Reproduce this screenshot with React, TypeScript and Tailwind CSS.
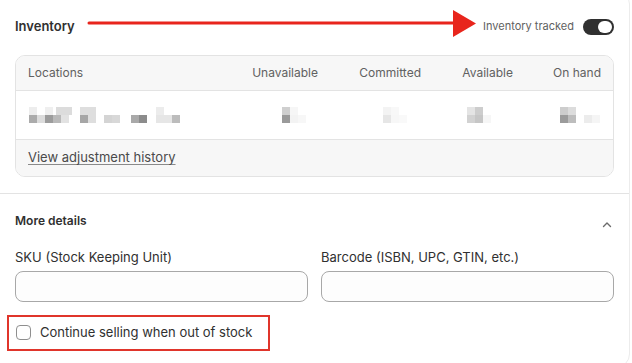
import React from 'react';

type Px = [number, number, string];

// blurred stock numbers (x, row, colour)
const locationPx: Px[] = [
  [0, 0, '#ededed'], [16, 0, '#efefef'], [27, 0, '#dcdcdc'], [35, 0, '#dcdcdc'], [51, 0, '#dedede'], [59, 0, '#dedede'], [127, 0, '#ececec'],
  [0, 1, '#ababab'], [8, 1, '#dcdcdc'], [16, 1, '#9c9c9c'], [24, 1, '#b9b9b9'], [32, 1, '#e2e2e2'],
  [51, 1, '#a6a6a6'], [59, 1, '#dedede'], [75, 1, '#d4d4d4'], [83, 1, '#d8d8d8'],
  [102, 1, '#a9a9a9'], [110, 1, '#8c8c8c'], [127, 1, '#e6e6e6'], [135, 1, '#e6e6e6'], [143, 1, '#bcbcbc'],
];
const unavailablePx: Px[] = [[0, 0, '#cfcfcf'], [8, 0, '#f6f6f6'], [0, 1, '#9a9a9a'], [8, 1, '#f3f3f3'], [16, 1, '#f7f7f7']];
const committedPx: Px[] = [[0, 0, '#f3f3f3'], [8, 0, '#f8f8f8'], [0, 1, '#e6e6e6'], [8, 1, '#f7f7f7'], [16, 1, '#f9f9f9']];
const availablePx: Px[] = [[0, 0, '#e4e4e4'], [8, 0, '#cdcdcd'], [0, 1, '#d2d2d2'], [8, 1, '#c6c6c6'], [16, 1, '#f6f6f6']];
const onHandPx: Px[] = [[0, 0, '#cdcdcd'], [8, 0, '#dcdcdc'], [0, 1, '#9b9b9b'], [8, 1, '#bdbdbd'], [24, 1, '#ececec'], [32, 1, '#f5f5f5']];

function Pixels({ data, width }: { data: Px[]; width: number }) {
  return (
    <div className="relative h-[16px]" style={{ width }}>
      {data.map(([x, r, c], i) => (
        <div key={i} className="absolute h-[8px] w-[8px]" style={{ left: x, top: r * 8, background: c }} />
      ))}
    </div>
  );
}

export default function App() {
  return (
    <div className="h-[363px] w-[632px] overflow-hidden bg-white" style={{ fontFamily: 'Inter, "Noto Sans", sans-serif' }}>
      <div className="-ml-[10px] -mt-[10px] w-[640px] rounded-[14px] border border-[#ececec] bg-white pl-[9px] pt-[17px] pb-[16px] text-[#303030]">
        {/* Inventory header */}
        <div className="relative flex h-[35px] items-center justify-between pl-[15px] pr-[15px] pt-[2px]">
          <h2 className="text-[13px] font-semibold">Inventory</h2>
          <div className="flex items-center gap-[9px]">
            <span className="text-[11px] text-[#616161]">Inventory tracked</span>
            <div className="flex h-[16px] w-[31px] items-center justify-end rounded-full bg-[#303030] pr-[2px]">
              <div className="h-[12px] w-[14px] rounded-full bg-white" />
            </div>
          </div>
          {/* annotation arrow */}
          <svg className="absolute left-[87px] top-[0px]" width="392" height="30" viewBox="0 0 392 30">
            <line x1="2" y1="15" x2="370" y2="15" stroke="#e8251c" strokeWidth="3" strokeLinecap="round" />
            <polygon points="366,2 389,15.5 366,29" fill="#e8251c" />
          </svg>
        </div>

        {/* locations table */}
        <div className="mx-[15px] mt-[12px] overflow-hidden rounded-[10px] border border-[#e3e3e3]">
          <div className="grid h-[35px] grid-cols-[1fr_103px_103px_92px_88px] items-center border-b border-[#e3e3e3] bg-[#f7f7f7] pl-[12px] pr-[12px] text-[12px] text-[#616161]">
            <span>Locations</span>
            <span className="text-right">Unavailable</span>
            <span className="text-right">Committed</span>
            <span className="text-right">Available</span>
            <span className="text-right">On hand</span>
          </div>
          <div className="flex h-[49px] items-center border-b border-[#e3e3e3] bg-white pl-[13px]">
            <Pixels data={locationPx} width={151} />
            <div className="ml-[102px]"><Pixels data={unavailablePx} width={24} /></div>
            <div className="ml-[77px]"><Pixels data={committedPx} width={24} /></div>
            <div className="ml-[60px]"><Pixels data={availablePx} width={24} /></div>
            <div className="ml-[69px]"><Pixels data={onHandPx} width={40} /></div>
          </div>
          <div className="flex h-[36px] items-center bg-[#f7f7f7] pl-[12px]">
            <span className="text-[13px] text-[#4a4a4a] underline decoration-[#8a8a8a] underline-offset-[2px]">View adjustment history</span>
          </div>
        </div>

        <div className="-ml-[9px] mt-[16px] border-t border-[#e3e3e3]" />

        {/* More details */}
        <div className="px-[15px] pt-[15px]">
          <div className="flex items-center justify-between">
            <span className="text-[12px] font-semibold">More details</span>
            <svg width="14" height="14" viewBox="0 0 14 14" className="mt-[9px]">
              <path d="M3.5 8.5 7 5l3.5 3.5" fill="none" stroke="#6b6b6b" strokeWidth="1.4" strokeLinecap="round" strokeLinejoin="round" />
            </svg>
          </div>
          <div className="mt-[16px] grid grid-cols-2 gap-[13px]">
            <label className="flex flex-col gap-[3px]">
              <span className="text-[13px]">SKU (Stock Keeping Unit)</span>
              <div className="h-[31px] rounded-[8px] border border-[#a8a8a8] bg-[#fdfdfd]" />
            </label>
            <label className="flex flex-col gap-[3px]">
              <span className="text-[13px]">Barcode (ISBN, UPC, GTIN, etc.)</span>
              <div className="h-[31px] rounded-[8px] border border-[#a8a8a8] bg-[#fdfdfd]" />
            </label>
          </div>
          <div className="-ml-[8px] mt-[13px] inline-flex h-[36px] w-[263px] items-center gap-[9px] border-[2.5px] border-[#e0352b] pl-[7px]">
            <div className="h-[15px] w-[15px] rounded-[4px] border border-[#8f8f8f] bg-white" />
            <span className="text-[13px]">Continue selling when out of stock</span>
          </div>
        </div>
      </div>
    </div>
  );
}
